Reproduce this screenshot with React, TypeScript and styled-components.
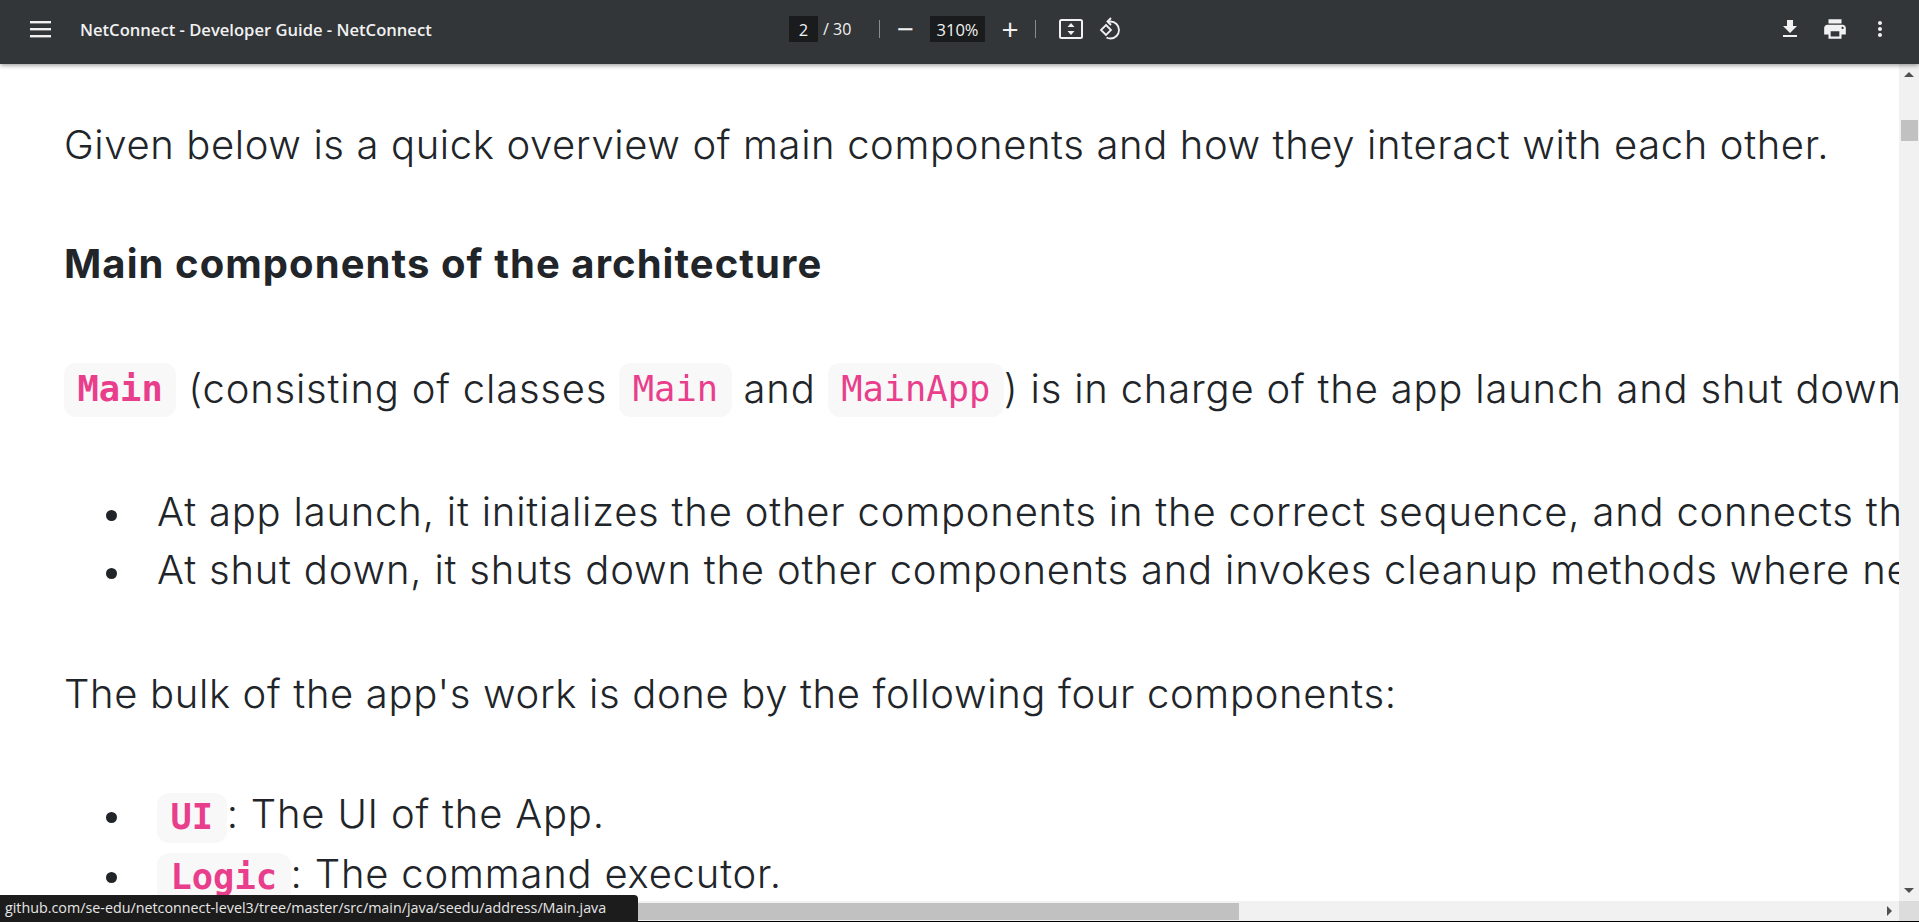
import React, { FC } from 'react';
import styled, { createGlobalStyle } from 'styled-components';

const Global = createGlobalStyle`
	html, body {
		margin: 0;
		height: 100%;
		overflow: hidden;
		background: #fff;
	}
	#root {
		height: 100%;
	}
`;

const MenuIcon: FC = () => (
	<svg width="21" height="17" viewBox="0 0 21 17" fill="#f1f1f1">
		<rect x="0" y="0" width="21" height="2.4" />
		<rect x="0" y="7" width="21" height="2.4" />
		<rect x="0" y="14" width="21" height="2.4" />
	</svg>
);

const FitIcon: FC = () => (
	<svg width="24" height="20" viewBox="0 0 24 20" fill="none">
		<rect x="1" y="1" width="22" height="18" rx="1.5" stroke="#f1f1f1" strokeWidth="2" />
		<path d="M12 4l3.5 4h-7zM12 16l-3.5-4h7z" fill="#f1f1f1" />
	</svg>
);

const RotateIcon: FC = () => (
	<svg width="24" height="24" viewBox="0 0 24 24" fill="none" stroke="#f1f1f1" strokeWidth="1.8">
		<path d="M8 8l5 5-5 5-5-5z" />
		<path d="M9.5 4.5h3a8.5 8.5 0 0 1 0 17c-1.7 0-3-.4-4-1" />
		<path d="M13 1L9.5 4.5 13 8" />
	</svg>
);

const DownloadIcon: FC = () => (
	<svg width="24" height="24" viewBox="0 0 24 24" fill="#f1f1f1">
		<path d="M19 9h-4V3H9v6H5l7 7 7-7zM5 18v2h14v-2H5z" />
	</svg>
);

const PrintIcon: FC = () => (
	<svg width="26" height="26" viewBox="0 0 24 24" fill="#f1f1f1">
		<path d="M19 8H5c-1.66 0-3 1.34-3 3v6h4v4h12v-4h4v-6c0-1.66-1.34-3-3-3zm-3 11H8v-5h8v5zm3-7c-.55 0-1-.45-1-1s.45-1 1-1 1 .45 1 1-.45 1-1 1zm-1-9H6v4h12V3z" />
	</svg>
);

const DotsIcon: FC = () => (
	<svg width="24" height="24" viewBox="0 0 24 24" fill="#f1f1f1">
		<path d="M12 8c1.1 0 2-.9 2-2s-.9-2-2-2-2 .9-2 2 .9 2 2 2zm0 2c-1.1 0-2 .9-2 2s.9 2 2 2 2-.9 2-2-.9-2-2-2zm0 6c-1.1 0-2 .9-2 2s.9 2 2 2 2-.9 2-2-.9-2-2-2z" />
	</svg>
);

const Arrow: FC<{ dir: 'up' | 'down' | 'right' }> = ({ dir }) => {
	const points = { up: '0,8 5,3 10,8', down: '0,2 10,2 5,7', right: '3,0 8,5 3,10' }[dir];
	return (
		<svg width="10" height="10" viewBox="0 0 10 10" fill="#505050">
			<polygon points={points} />
		</svg>
	);
};

const App: FC = () => (
	<Page>
		<Global />
		<Toolbar>
			<TitleGroup>
				<IconSlot>
					<MenuIcon />
				</IconSlot>
				<Title>NetConnect - Developer Guide - NetConnect</Title>
			</TitleGroup>
			<Controls>
				<Field width={29}>2</Field>
				<PageCount>/ 30</PageCount>
				<Separator />
				<ZoomSign>−</ZoomSign>
				<Field width={55}>310%</Field>
				<ZoomSign>+</ZoomSign>
				<Separator />
				<FitSlot>
					<FitIcon />
				</FitSlot>
				<RotateSlot>
					<RotateIcon />
				</RotateSlot>
			</Controls>
			<Actions>
				<IconSlot>
					<DownloadIcon />
				</IconSlot>
				<IconSlot>
					<PrintIcon />
				</IconSlot>
				<IconSlot>
					<DotsIcon />
				</IconSlot>
			</Actions>
		</Toolbar>
		<Middle>
			<Content>
				<Paragraph>
					Given below is a quick overview of main components and how they interact with each other.
				</Paragraph>
				<Heading>Main components of the architecture</Heading>
				<ChipParagraph>
					<Chip $bold>Main</Chip>
					<FirstAfterChip>(consisting of classes </FirstAfterChip>
					<Chip>Main</Chip> and <Chip>MainApp</Chip>) is in charge of the app launch and shut down.
				</ChipParagraph>
				<List>
					<li>
						At app launch, it initializes the other components in the correct sequence, and connects
						them with each other.
					</li>
					<li>
						At shut down, it shuts down the other components and invokes cleanup methods where
						necessary.
					</li>
				</List>
				<BulkParagraph>The bulk of the app's work is done by the following four components:</BulkParagraph>
				<ComponentList>
					<li>
						<SmallChip>UI</SmallChip>: The UI of the App.
					</li>
					<li>
						<SmallChip>Logic</SmallChip>: The command executor.
					</li>
				</ComponentList>
			</Content>
			<VerticalBar>
				<VerticalArrow>
					<Arrow dir="up" />
				</VerticalArrow>
				<VerticalTrack>
					<VerticalThumb />
				</VerticalTrack>
				<VerticalArrow>
					<Arrow dir="down" />
				</VerticalArrow>
			</VerticalBar>
		</Middle>
		<HorizontalBar>
			<HorizontalTrack>
				<HorizontalThumb />
				<HorizontalArrow>
					<Arrow dir="right" />
				</HorizontalArrow>
			</HorizontalTrack>
			<Corner />
		</HorizontalBar>
		<BottomLine />
		<StatusBubble>github.com/se-edu/netconnect-level3/tree/master/src/main/java/seedu/address/Main.java</StatusBubble>
	</Page>
);

export default App;

const Page = styled.div`
	position: relative;
	display: flex;
	flex-direction: column;
	height: 922px;
	overflow: hidden;
	font-family: Inter, 'Noto Sans', sans-serif;
	color: #212529;
`;

const Toolbar = styled.header`
	position: relative;
	z-index: 2;
	display: grid;
	grid-template-columns: 789px 1fr auto;
	align-items: center;
	flex: none;
	height: 64px;
	padding-bottom: 6px;
	box-sizing: border-box;
	background: #323639;
	box-shadow: 0 1px 5px rgba(0, 0, 0, 0.45);
	color: #f1f1f1;
`;

const TitleGroup = styled.div`
	display: flex;
	align-items: center;
	padding-left: 30px;
	gap: 29px;
`;

const Title = styled.div`
	font: 600 16.6px 'Open Sans', sans-serif;
	white-space: nowrap;
`;

const IconSlot = styled.div`
	display: flex;
	align-items: center;
	justify-content: center;
`;

const FitSlot = styled(IconSlot)`
	margin-left: 23px;
`;

const RotateSlot = styled(IconSlot)`
	margin-left: 15px;
`;

const Controls = styled.div`
	display: flex;
	align-items: center;
`;

const Field = styled.div<{ width: number }>`
	display: flex;
	align-items: center;
	justify-content: center;
	width: ${(props) => props.width}px;
	height: 26px;
	background: #191b1c;
	font: 400 16.5px 'Open Sans', sans-serif;
`;

const PageCount = styled.div`
	width: 61px;
	padding-left: 5px;
	box-sizing: border-box;
	font: 400 16px 'Open Sans', sans-serif;
`;

const Separator = styled.div`
	width: 1px;
	height: 18px;
	background: #8a8c8e;
`;

const ZoomSign = styled.div`
	width: 50px;
	text-align: center;
	font: 400 30px/26px 'Open Sans', sans-serif;
`;

const Actions = styled.div`
	display: flex;
	align-items: center;
	gap: 20px;
	padding-right: 27px;
`;

const Middle = styled.div`
	display: flex;
	flex: 1;
	min-height: 0;
`;

const Content = styled.main`
	flex: 1;
	min-width: 0;
	overflow: hidden;
	padding: 52px 0 0 64px;
	font-size: 40px;
	font-weight: 300;
	letter-spacing: 0.62px;
	line-height: 58px;
	white-space: nowrap;
`;

const Paragraph = styled.p`
	margin: 0;
`;

const Heading = styled.h2`
	margin: 61px 0 0;
	font-size: 40px;
	line-height: 58px;
	font-weight: 700;
	letter-spacing: 1.07px;
`;

const ChipParagraph = styled.p`
	margin: 67px 0 0;
	letter-spacing: 0.8px;
`;

const FirstAfterChip = styled.span`
	margin-left: 12px;
`;

const Chip = styled.code<{ $bold?: boolean }>`
	display: inline-block;
	height: 54px;
	margin-top: 3px;
	padding: 0 13.5px;
	border-radius: 12px;
	background: #f8f8f8;
	color: #e83e8c;
	font: ${(props) => (props.$bold ? 700 : 400)} 35.4px/52px 'DejaVu Sans Mono', monospace;
	letter-spacing: 0;
	vertical-align: top;
`;

const List = styled.ul`
	margin: 65px 0 0;
	padding: 0 0 0 93px;
	list-style: none;
	letter-spacing: 0.8px;

	li {
		position: relative;
	}

	li::before {
		content: '';
		position: absolute;
		left: -51px;
		top: 27px;
		width: 11px;
		height: 11px;
		border-radius: 50%;
		background: #212529;
	}
`;

const BulkParagraph = styled.p`
	margin: 66px 0 0;
	letter-spacing: 0.65px;
`;

const ComponentList = styled(List)`
	margin-top: 62px;

	li {
		height: 60px;
	}
`;

const SmallChip = styled.code`
	display: inline-block;
	height: 50px;
	margin-top: 8px;
	padding: 0 13.5px;
	border-radius: 12px;
	background: #f8f8f8;
	color: #e83e8c;
	font: 700 35.4px/47px 'DejaVu Sans Mono', monospace;
	letter-spacing: 0;
	vertical-align: top;
`;

const VerticalBar = styled.div`
	display: flex;
	flex-direction: column;
	flex: none;
	width: 20px;
	background: #f1f1f1;
`;

const VerticalArrow = styled.div`
	display: flex;
	align-items: center;
	justify-content: center;
	flex: none;
	height: 20px;
`;

const VerticalTrack = styled.div`
	flex: 1;
	padding: 36px 1px 0 2px;
`;

const VerticalThumb = styled.div`
	height: 21px;
	background: #c1c1c1;
`;

const HorizontalBar = styled.div`
	display: flex;
	flex: none;
	height: 20px;
	background: #f1f1f1;
`;

const HorizontalTrack = styled.div`
	display: flex;
	flex: 1;
	align-items: center;
	justify-content: space-between;
`;

const HorizontalThumb = styled.div`
	width: 1239px;
	height: 17px;
	background: #c1c1c1;
`;

const HorizontalArrow = styled.div`
	display: flex;
	align-items: center;
	justify-content: center;
	width: 20px;
	height: 20px;
`;

const Corner = styled.div`
	width: 20px;
	background: #dcdcdc;
`;

const BottomLine = styled.div`
	flex: none;
	height: 1px;
	background: #000;
`;

const StatusBubble = styled.div`
	position: absolute;
	left: 0;
	bottom: 0;
	z-index: 3;
	box-sizing: border-box;
	width: 638px;
	height: 27px;
	padding-left: 5px;
	border-top-right-radius: 4px;
	background: #1c1c1c;
	color: #e6e6e6;
	font: 400 14.3px/26px 'Open Sans', sans-serif;
	white-space: nowrap;
`;
